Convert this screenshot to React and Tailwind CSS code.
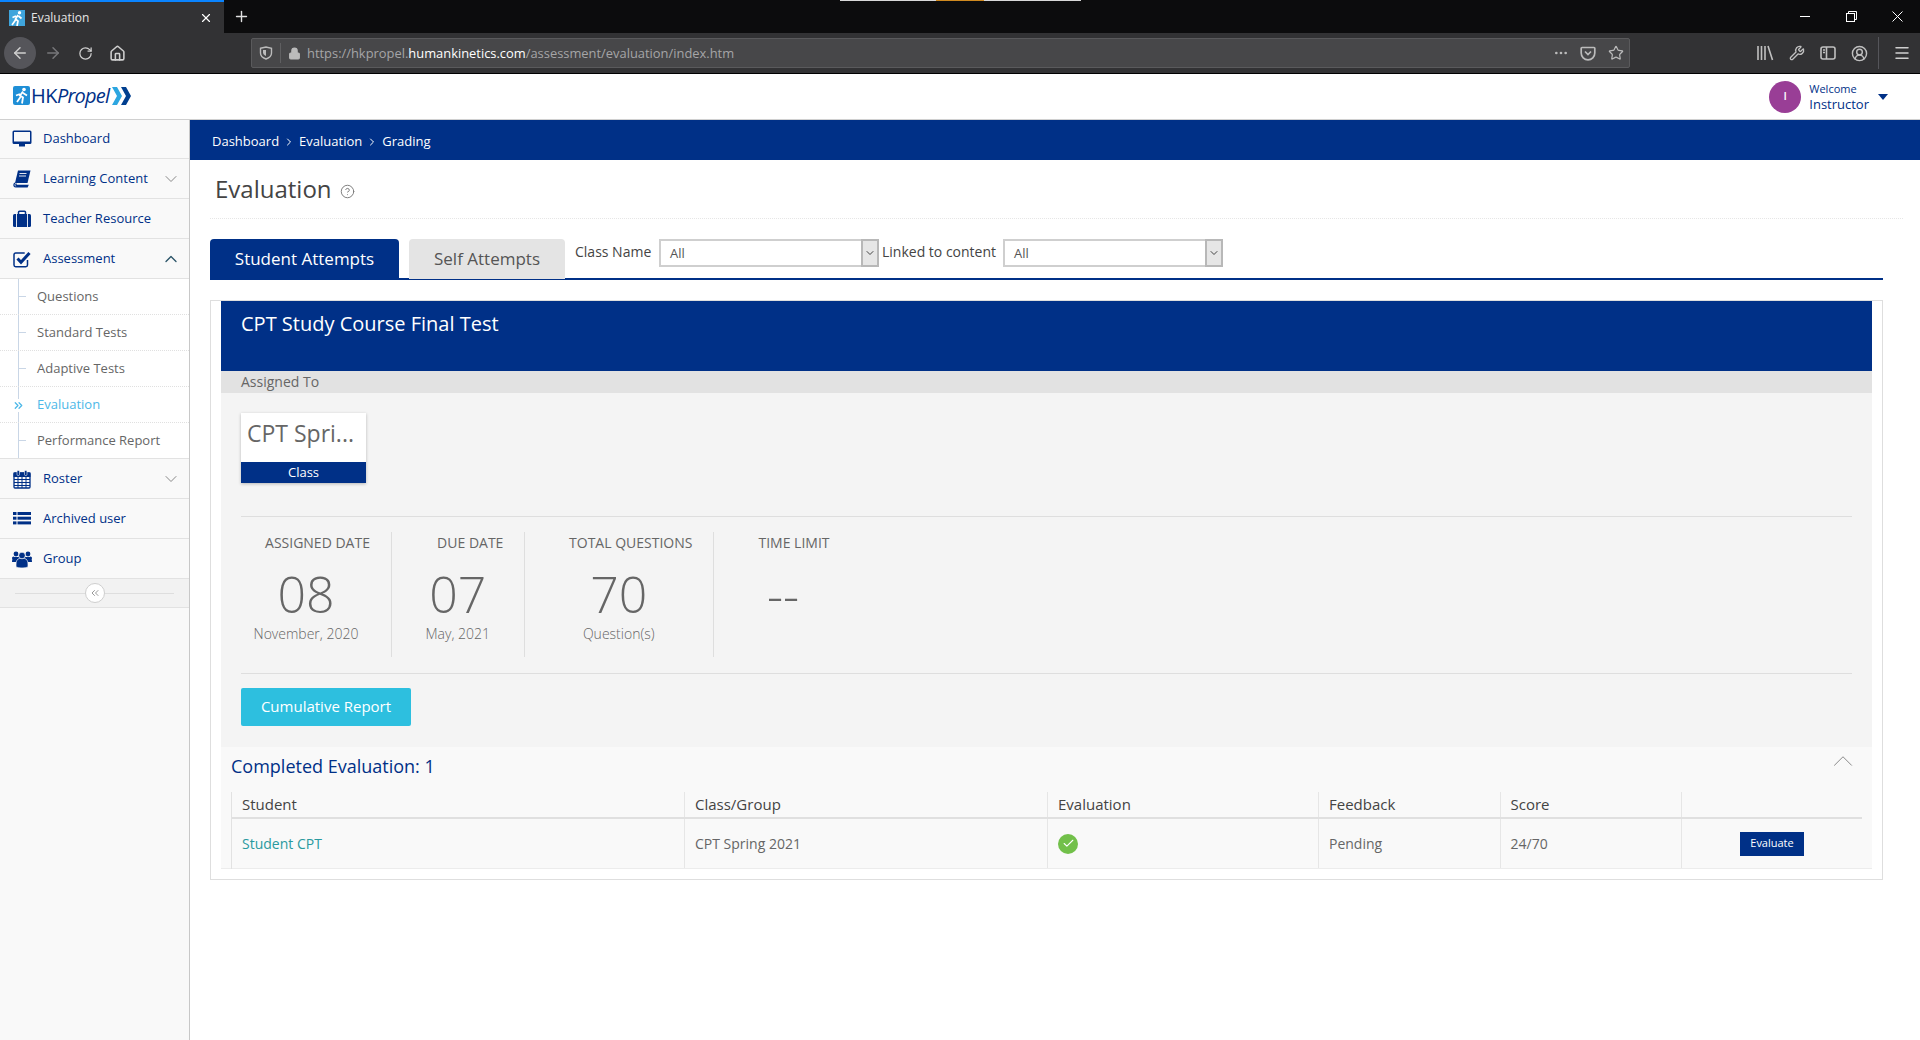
// App.jsx
import React from 'react';
import {
  ArrowLeft, ArrowRight, RotateCw, House, Lock, Ellipsis, Star, Wrench, CircleUserRound, Menu, X, Plus,
  ChevronDown, ChevronUp, ChevronRight, ChevronsRight, ChevronsLeft, CircleHelp, Check,
} from 'lucide-react';

const NAVY = 'text-[#003087]';

// sidebar icons, drawn because the packages only have the newer shapes
const MonitorIcon = () => (
  <svg width="20" height="20" viewBox="0 0 20 20" fill="currentColor">
    <path fillRule="evenodd" d="M2 1.5h16a1.5 1.5 0 0 1 1.5 1.5v10.5a1.5 1.5 0 0 1-1.5 1.5H2a1.5 1.5 0 0 1-1.5-1.5V3A1.5 1.5 0 0 1 2 1.5zM2 3v9.5h16V3z" />
    <rect x="7" y="15" width="6" height="2.5" />
  </svg>
);
const BookIcon = () => (
  <svg width="20" height="20" viewBox="0 0 20 20" fill="currentColor">
    <path d="M6 1.5h12.5L15.5 14H3z" />
    <path d="M3 14c-1.6 1.2-1.4 3.8.6 3.8h11.6l.6-1.3H4.6c-1-.1-1-1.3 0-1.6" fill="none" stroke="currentColor" strokeWidth="1.3" />
    <path d="M7.5 4.5h7M7 7h7" stroke="#f9f9f9" strokeWidth="0.9" />
  </svg>
);
const CaseIcon = () => (
  <svg width="20" height="20" viewBox="0 0 20 20" fill="currentColor">
    <path d="M6.5 5V3.2c0-.6.4-1 1-1h5c.6 0 1 .4 1 1V5" fill="none" stroke="currentColor" strokeWidth="1.5" />
    <rect x="1" y="5" width="18" height="13" rx="1.5" />
    <path d="M4.5 5v13M15.5 5v13" stroke="#f9f9f9" strokeWidth="0.9" />
  </svg>
);
const CheckIcon = () => (
  <svg width="20" height="20" viewBox="0 0 20 20" fill="none" stroke="currentColor">
    <path d="M15.5 11v5a1.7 1.7 0 0 1-1.7 1.7H3.7A1.7 1.7 0 0 1 2 16V5.7A1.7 1.7 0 0 1 3.7 4h9" strokeWidth="1.5" />
    <path d="M5.5 9.5l3.5 3.7 8.5-9.2" strokeWidth="3" />
  </svg>
);
const CalendarIcon = () => (
  <svg width="20" height="20" viewBox="0 0 20 20" fill="none" stroke="currentColor">
    <rect x="2" y="4" width="16" height="15" rx="1" strokeWidth="1.3" />
    <rect x="2" y="4" width="16" height="3.5" fill="currentColor" strokeWidth="1" />
    <path d="M2 10.5h16M2 13.5h16M2 16.5h16M6 7.5V19M10 7.5V19M14 7.5V19" strokeWidth="1" />
    <rect x="5" y="1.5" width="2.5" height="5" rx="1" fill="currentColor" stroke="#f9f9f9" strokeWidth="0.6" />
    <rect x="12.5" y="1.5" width="2.5" height="5" rx="1" fill="currentColor" stroke="#f9f9f9" strokeWidth="0.6" />
  </svg>
);
const ListIcon = () => (
  <svg width="20" height="20" viewBox="0 0 20 20" fill="currentColor">
    <rect x="1" y="3" width="3.5" height="3" /><rect x="5.5" y="3" width="13.5" height="3" />
    <rect x="1" y="7.7" width="3.5" height="3" /><rect x="5.5" y="7.7" width="13.5" height="3" />
    <rect x="1" y="12.4" width="3.5" height="3" /><rect x="5.5" y="12.4" width="13.5" height="3" />
  </svg>
);
const GroupIcon = () => (
  <svg width="20" height="20" viewBox="0 0 20 20" fill="currentColor">
    <circle cx="4" cy="5" r="2.4" /><circle cx="16" cy="5" r="2.4" /><circle cx="1.5" cy="9" r="1.5" /><circle cx="18.5" cy="9" r="1.5" />
    <path d="M0 13c0-3 1-5 3-5h14c2 0 3 2 3 5h-4v1H4v-1z" />
    <path d="M4 18v-3c0-3 1.500-5.500 3.500-5.500h5c2 0 3.500 2.500 3.500 5.500v3c-3 1.300-9 1.300-12 0z" stroke="#f9f9f9" strokeWidth="0.7" />
    <circle cx="10" cy="6.500" r="3.300" stroke="#f9f9f9" strokeWidth="0.7" />
  </svg>
);

const BrowserChrome = () => (
  <div className="bg-[#323234] text-[#cfcfcf]">
    <div className="flex h-[33px] bg-[#0c0c0d] items-stretch relative">
      <div className="w-[224px] bg-[#323234] border-t-2 border-[#0a84ff] flex items-center pl-[9px] pr-[11px] text-[12px] text-[#e6e6e6]">
        <svg className="mr-[6px]" width="16" height="16" viewBox="0 0 16 16">
          <rect width="16" height="16" fill="#3fa5dc" />
          <circle cx="10.500" cy="2.800" r="1.700" fill="#fff" />
          <path d="M9 5L6.500 9l2.500 2-1 5M7 6L3.500 7.500M9.500 6l3 2.500M6.500 10L3 15" stroke="#fff" strokeWidth="1.700" fill="none" />
        </svg>
        <span className="flex-1">Evaluation</span>
        <X size={14} className="text-white" />
      </div>
      <div className="w-[34px] flex items-center justify-center"><Plus size={17} className="text-[#e0e0e0]" /></div>
      <div className="absolute top-0 left-[840px] w-[241px] h-px bg-[#d8d8d8]">
        <div className="ml-[96px] w-[48px] h-px bg-[#d08a20]" />
      </div>
      <div className="ml-auto flex items-center text-white">
        <div className="w-[46px] flex justify-center"><div className="w-[10px] h-px bg-white" /></div>
        <div className="w-[46px] flex justify-center">
          <svg width="11" height="11" viewBox="0 0 11 11" fill="none" stroke="currentColor"><rect x="0.5" y="2.5" width="8" height="8" /><path d="M2.5 2.500v-2h8v8h-2" /></svg>
        </div>
        <div className="w-[46px] flex justify-center">
          <svg width="11" height="11" viewBox="0 0 11 11" fill="none" stroke="currentColor"><path d="M.5.5l10 10M10.500.5l-10 10" /></svg>
        </div>
      </div>
    </div>
    <div className="h-[41px] flex items-center pl-[4px] border-b border-black">
      <div className="w-[32px] h-[32px] rounded-full bg-[#55555a] flex items-center justify-center"><ArrowLeft size={18} /></div>
      <div className="w-[34px] flex justify-center text-[#77777a]"><ArrowRight size={18} /></div>
      <div className="w-[30px] flex justify-center"><RotateCw size={15} /></div>
      <div className="w-[34px] flex justify-center"><House size={17} strokeWidth={2.2} /></div>
      <div className="ml-[117px] w-[1379px] h-[30px] bg-[#474749] border border-[#5a5a5c] rounded-[2px] flex items-center text-[13px] pl-[7px] pr-[5px]">
        <svg className="text-[#bbb]" width="14" height="14" viewBox="0 0 14 14" fill="none" stroke="currentColor" strokeWidth="1.400">
          <path d="M1.500 2.200L7 1l5.500 1.200V7c0 3-2.500 5-5.500 6-3-1-5.500-3-5.500-6z" />
          <path d="M4 4h3v6C5 9 4 8 4 6.500z" fill="currentColor" stroke="none" />
        </svg>
        <div className="w-px h-[20px] bg-[#5f5f61] ml-[7px] mr-[7px]" />
        <Lock size={13} fill="#bbb" className="text-[#bbb] mr-[6px]" />
        <span className="text-[#a5a5a7] mt-[1px] text-[12.9px]">https://hkpropel.<span className="text-white">humankinetics.com</span>/assessment/evaluation/index.htm</span>
        <Ellipsis size={16} className="ml-auto text-[#bbb]" />
        <svg className="ml-[11px] text-[#bbb]" width="16" height="16" viewBox="0 0 16 16" fill="none" stroke="currentColor" strokeWidth="1.700"><path d="M2 2.500h12a.8.8 0 0 1 .8.8V8a6.800 6.800 0 0 1-13.600 0V3.300a.8.8 0 0 1 .8-.8zM5 6.500l3 3 3-3" /></svg>
        <Star size={16} strokeWidth={1.8} className="ml-[12px] text-[#bbb]" />
      </div>
      <div className="ml-[126px] flex items-center gap-[15px] text-[#c0c0c0]">
        <svg width="18" height="16" viewBox="0 0 18 16" fill="none" stroke="currentColor" strokeWidth="1.600"><path d="M2 1v14M5.500 1v14M9 1v14M12 1l4.500 14" /></svg>
        <Wrench size={16} />
        <svg width="16" height="16" viewBox="0 0 16 16" fill="none" stroke="currentColor" strokeWidth="1.600"><rect x="1" y="2" width="14" height="12" rx="2" /><path d="M6.500 2v12M3 5h2M3 7.500h2" /></svg>
        <CircleUserRound size={17} />
      </div>
      <div className="w-px h-[32px] bg-[#55555a] ml-[10px]" />
      <Menu size={18} className="ml-[14px]" />
    </div>
  </div>
);

const TopBar = () => (
  <div className="h-[46px] bg-white border-b border-[#d0d0d0] flex items-center pl-[13px] pr-[32px]">
    <div className={`flex items-center ${NAVY} text-[20px] leading-none -mt-[2px]`}>
      <svg width="17" height="19" viewBox="0 0 17 19">
        <rect width="17" height="19" rx="2" fill="#1f8fd6" />
        <circle cx="11" cy="3.500" r="1.800" fill="#fff" />
        <path d="M10 5.500l-3 4 3 2-1 6M7 8L3 9.500M10 7l4 2.500M7.500 11l-3.500 5" stroke="#fff" strokeWidth="1.800" fill="none" />
      </svg>
      <span className="ml-[1px] tracking-[-0.5px]">HK</span>
      <span className="italic tracking-[-0.8px]">Propel</span>
      <svg className="ml-[3px]" width="20" height="18" viewBox="0 0 20 18"><path d="M0 0h5l5 9-5 9H0l5-9z" fill="#2ca6e0" /><path d="M9 0h5l5 9-5 9H9l5-9z" fill="#003f8f" /></svg>
    </div>
    <div className="ml-auto flex items-center">
      <div className="w-[32px] h-[32px] rounded-full bg-[#993e96] text-white text-[11px] font-semibold flex items-center justify-center">I</div>
      <div className={`ml-[8px] ${NAVY}`}>
        <div className="text-[11px] leading-[15px]">Welcome</div>
        <div className="text-[13px] leading-[16px]">Instructor</div>
      </div>
      <div className="ml-[9px] w-0 h-0 border-x-[5px] border-x-transparent border-t-[6px] border-t-[#003087]" />
    </div>
  </div>
);

const NavRow = ({ icon: Icon, label, chevron, first }) => (
  <div className={`${first ? 'h-[39px]' : 'h-[40px]'} flex items-center border-b border-[#e2e2e2] pl-[12px] pr-[8px]`}>
    <span className={NAVY}><Icon /></span>
    <span className={`ml-[11px] text-[13px] ${NAVY}`}>{label}</span>
    {chevron === 'down' && <ChevronDown size={20} strokeWidth={1.2} className="ml-auto text-[#888]" />}
    {chevron === 'up' && <ChevronUp size={20} strokeWidth={1.6} className="ml-auto text-[#2b5468]" />}
  </div>
);

const subItems = ['Questions', 'Standard Tests', 'Adaptive Tests', 'Evaluation', 'Performance Report'];

const Sidebar = () => (
  <aside className="w-[190px] shrink-0 bg-[#f9f9f9] border-r border-[#c8c8c8]">
    <NavRow first icon={MonitorIcon} label="Dashboard" />
    <NavRow icon={BookIcon} label="Learning Content" chevron="down" />
    <NavRow icon={CaseIcon} label="Teacher Resource" />
    <NavRow icon={CheckIcon} label="Assessment" chevron="up" />
    <div className="bg-white border-b border-[#e2e2e2] relative">
      <div className="absolute left-[18px] top-0 bottom-0 w-px bg-[#c9d6e6]" />
      {subItems.map((item, i) => (
        <div key={item} className={`relative ${i < 4 ? 'h-[36px] border-b border-dotted border-[#e0e0e0]' : 'h-[35px]'} flex items-center pl-[37px] text-[13px] ${item === 'Evaluation' ? 'text-[#4db8e8]' : 'text-[#666]'}`}>
          {item === 'Evaluation' ? (
            <ChevronsRight size={13} strokeWidth={2.4} className="absolute left-[12px] top-[12px] bg-white text-[#4db8e8]" />
          ) : (
            <div className="absolute left-[18px] top-[17px] w-[8px] h-px bg-[#c9d6e6]" />
          )}
          {item}
        </div>
      ))}
    </div>
    <NavRow icon={CalendarIcon} label="Roster" chevron="down" />
    <NavRow icon={ListIcon} label="Archived user" />
    <NavRow icon={GroupIcon} label="Group" />
    <div className="h-[29px] bg-[#f2f2f2] border-b border-[#e2e2e2] relative flex items-center justify-center">
      <div className="absolute left-[15px] right-[15px] top-[14px] h-px bg-[#dedede]" />
      <div className="relative w-[20px] h-[20px] rounded-full bg-white border border-[#cfcfcf] flex items-center justify-center">
        <ChevronsLeft size={12} className="text-[#999]" />
      </div>
    </div>
  </aside>
);

const Stat = ({ title, value, sub, width, bodyPad, titlePad, last }) => (
  <div className={`${width} h-[125px] text-center ${last ? '' : 'border-r border-[#dedede]'}`}>
    <div className={`text-[14px] leading-[20px] mt-[1px] ${titlePad}`}>{title}</div>
    <div className={bodyPad}>
      <div className="text-[50px] font-light leading-[59px] mt-[12px]">{value}</div>
      {sub && <div className="text-[14px] font-light leading-[20px]">{sub}</div>}
    </div>
  </div>
);

const cols = [
  { label: 'Student', width: 'w-[453px]' },
  { label: 'Class/Group', width: 'w-[363px]' },
  { label: 'Evaluation', width: 'w-[271px]' },
  { label: 'Feedback', width: 'w-[181.5px]' },
  { label: 'Score', width: 'w-[181.5px]' },
  { label: '', width: 'flex-1' },
];

const SelectBox = () => (
  <div className="w-[220px] h-[28px] bg-white border-y-2 border-l-2 border-[#cfcfcf] flex items-center pl-[9px] text-[#555] text-[13px]">
    <span className="mt-[1px]">All</span>
    <div className="ml-auto w-[18px] h-[28px] -my-[2px] bg-[#e6e6e6] border-2 border-[#b8b8b8] flex items-center justify-center"><ChevronDown size={12} className="text-[#444]" /></div>
  </div>
);

const Panel = () => (
  <div className="mt-[20px] border border-[#dedede] h-[580px] pl-[10px] pr-[10px]">
    <div className="h-[70px] bg-[#003087] text-white text-[20px] pl-[20px] pt-[8px]">CPT Study Course Final Test</div>
    <div className="h-[22px] bg-[#e2e2e2] text-[#666] text-[14px] leading-[22px] pl-[20px]">Assigned To</div>
    <div className="bg-[#f4f4f4] h-[354px] px-[20px] pt-[20px]">
      <div className="w-[125px] h-[70px] bg-white shadow-[0_1px_3px_rgba(0,0,0,0.25)]">
        <div className="h-[49px] text-[23px] text-[#666] leading-[41px] pl-[6px]">CPT Spri...</div>
        <div className="h-[21px] bg-[#003087] text-white text-[13px] leading-[21px] text-center">Class</div>
      </div>
      <div className="mt-[33px] border-t border-b border-[#dedede] h-[158px] pt-[15px] flex text-[#666]">
        <Stat width="w-[151px]" titlePad="pl-[3px]" bodyPad="pr-[20px]" title="ASSIGNED DATE" value="08" sub="November, 2020" />
        <Stat width="w-[132.5px]" titlePad="pl-[25px]" title="DUE DATE" value="07" sub="May, 2021" />
        <Stat width="w-[189.5px]" titlePad="pl-[24px]" title="TOTAL QUESTIONS" value="70" sub="Question(s)" />
        <Stat last width="w-[170px]" titlePad="pr-[10px]" bodyPad="pr-[32px]" title="TIME LIMIT" value="--" />
      </div>
      <button className="mt-[14px] w-[170px] h-[38px] pb-[2px] bg-[#2dbfdf] text-white text-[15px] rounded-[2px]">Cumulative Report</button>
    </div>
    <div className="bg-[#f9f9f9] h-[122px] border-b border-[#ececec] pl-[10px] pr-[10px]">
      <div className="h-[39px] mb-[6px] flex items-center justify-between">
        <span className={`text-[18px] ${NAVY}`}>Completed Evaluation: 1</span>
        <ChevronUp size={34} strokeWidth={0.7} className="text-[#888] -mt-[11px] mr-[2px]" />
      </div>
      <div className="border-l border-[#e2e2e2]">
        <div className="flex h-[27px] border-b-2 border-[#e0e0e0]">
          {cols.map((c) => (
            <div key={c.label} className={`${c.width} border-r border-[#e6e6e6] last:border-r-0 pl-[10px] text-[15px] leading-[25px] text-[#444]`}>{c.label}</div>
          ))}
        </div>
        <div className="flex h-[50px] text-[14px] text-[#666] items-stretch pb-[1px]">
          <div className="w-[453px] border-r border-[#e6e6e6] pl-[10px] flex items-center text-[#2a9a9f]">Student CPT</div>
          <div className="w-[363px] border-r border-[#e6e6e6] pl-[10px] flex items-center">CPT Spring 2021</div>
          <div className="w-[271px] border-r border-[#e6e6e6] pl-[10px] flex items-center">
            <div className="w-[20px] h-[20px] rounded-full bg-[#72c04a] flex items-center justify-center"><Check size={13} className="text-white" /></div>
          </div>
          <div className="w-[181.5px] border-r border-[#e6e6e6] pl-[10px] flex items-center">Pending</div>
          <div className="w-[181.5px] border-r border-[#e6e6e6] pl-[10px] flex items-center">24/70</div>
          <div className="flex-1 flex items-center justify-center">
            <button className="w-[64px] h-[24px] bg-[#003087] text-white text-[11px]">Evaluate</button>
          </div>
        </div>
      </div>
    </div>
  </div>
);

const App = () => (
  <div className="w-[1920px] h-[1040px] overflow-hidden flex flex-col font-['Open_Sans',sans-serif] bg-white">
    <BrowserChrome />
    <TopBar />
    <div className="flex flex-1 min-h-0">
      <Sidebar />
      <main className="flex-1 min-w-0">
        <div className="h-[40px] bg-[#003087] text-white text-[13px] flex items-center pl-[22px] pt-[4px]">
          Dashboard<ChevronRight size={12} className="mx-[4px]" />Evaluation<ChevronRight size={12} className="mx-[4px]" />Grading
        </div>
        <div className="pl-[20px] pr-[37px]">
          <div className="h-[59px] -mr-[20px] border-b border-dotted border-[#e6e6e6] flex items-center pl-[5px]">
            <span className="text-[24px] text-[#444]">Evaluation</span>
            <CircleHelp size={15} strokeWidth={1.5} className="ml-[8px] mt-[4px] text-[#777]" />
          </div>
          <div className="mt-[20px] h-[41px] flex border-b-2 border-[#003087]">
            <div className="w-[189px] h-[40px] bg-[#003087] text-white text-[17px] rounded-t-[4px] flex items-center justify-center">Student Attempts</div>
            <div className="ml-[10px] w-[156px] h-[40px] bg-[#e4e4e4] text-[#555] text-[17px] rounded-t-[4px] flex items-center justify-center">Self Attempts</div>
            <div className="ml-[10px] flex h-[28px] items-center text-[14px] text-[#444]">
              <span className="w-[84px] -mt-[3px]">Class Name</span>
              <SelectBox />
              <span className="ml-[3px] w-[121px] -mt-[3px]">Linked to content</span>
              <SelectBox />
            </div>
          </div>
          <Panel />
        </div>
      </main>
    </div>
  </div>
);

export default App;
